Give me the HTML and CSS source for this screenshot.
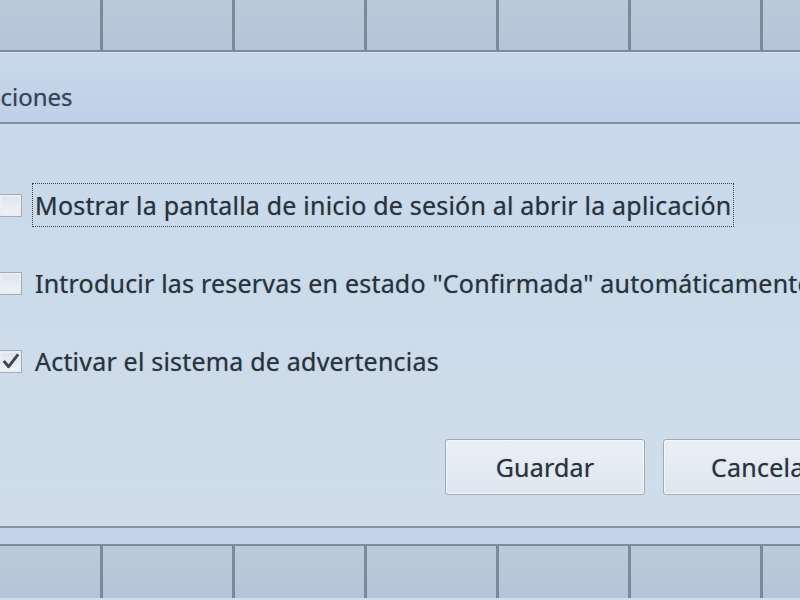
FILE: index.html
```html
<!DOCTYPE html>
<html lang="es">

<head>
    <meta charset="UTF-8">
    <meta name="viewport" content="width=device-width, initial-scale=1.0">
    <title>Opciones</title>
    <link rel="stylesheet" href="styles.css">
</head>

<body>
    <!-- Grid behind the dialog (top) -->
    <div class="grid grid-top">
        <div class="cell"></div>
        <div class="cell"></div>
        <div class="cell"></div>
        <div class="cell"></div>
        <div class="cell"></div>
        <div class="cell"></div>
        <div class="cell"></div>
    </div>

    <div class="dialog">
        <div class="title">Opciones</div>
        <div class="content">
            <div class="option">
                <span class="check"></span>
                <span class="label focused">Mostrar la pantalla de inicio de sesión al abrir la aplicación</span>
            </div>
            <div class="option">
                <span class="check"></span>
                <span class="label">Introducir las reservas en estado "Confirmada" automáticamente</span>
            </div>
            <div class="option">
                <span class="check checked">
                    <svg viewBox="0 0 22 22" width="22" height="22">
                        <path d="M4 11 L9 17 L19 4" fill="none" stroke="#3b4757" stroke-width="3" stroke-linejoin="round" />
                    </svg>
                </span>
                <span class="label">Activar el sistema de advertencias</span>
            </div>
            <div class="buttons">
                <button class="btn">Guardar</button>
                <button class="btn">Cancelar</button>
            </div>
        </div>
    </div>

    <div class="band"></div>

    <!-- Grid behind the dialog (bottom) -->
    <div class="grid grid-bottom">
        <div class="cell"></div>
        <div class="cell"></div>
        <div class="cell"></div>
        <div class="cell"></div>
        <div class="cell"></div>
        <div class="cell"></div>
        <div class="cell"></div>
    </div>
</body>

</html>
```

FILE: styles.css
```css
html,
body {
    margin: 0;
    height: 600px;
    overflow: hidden;
}

body {
    width: 800px;
    font-family: "Noto Sans", "Open Sans", sans-serif;
    color: #29323d;
    background-color: #cfdcea;
    display: flex;
    flex-direction: column;
}

.grid {
    display: flex;
    margin-left: -29px;
    background: linear-gradient(#bcc9da, #b6c4d8);
    flex-shrink: 0;
}

.grid-top {
    height: 50px;
    border-bottom: 2px solid #7d8c9c;
}

.grid-bottom {
    height: 52px;
    border-top: 2px solid #7d8c9c;
}

.cell {
    width: 129px;
    flex-shrink: 0;
    border-right: 3px solid #7b8999;
}

.dialog {
    margin-left: -40px;
    width: 940px;
    flex-shrink: 0;
    border-bottom: 2px solid #8494a6;
}

.title {
    height: 72px;
    box-sizing: border-box;
    padding: 29px 0 0 7px;
    font-size: 24px;
    line-height: 30px;
    color: #354457;
    text-shadow: 0 0 1px rgba(53, 68, 87, 0.5);
    background: linear-gradient(#c8d8ec, #bfd1e8);
    border-top: 1px solid #d6e2f1;
    border-bottom: 2px solid #8191a3;
}

.content {
    height: 402px;
    box-sizing: border-box;
    padding: 59px 0 0 39px;
    background: linear-gradient(#c9d9eb, #d0dde9);
    display: flex;
    flex-direction: column;
    gap: 34px;
}

.option {
    display: flex;
    align-items: center;
    height: 44px;
}

.check {
    width: 21px;
    height: 21px;
    border: 1px solid #a3adb9;
    background: linear-gradient(#dde4ec, #f1f4f7);
    box-shadow: inset 0 0 0 2px #e9eef3;
    flex-shrink: 0;
    display: flex;
    align-items: center;
    justify-content: center;
}

.check svg {
    display: block;
}

.label {
    margin-left: 10px;
    padding: 6px 2px;
    font-size: 25px;
    line-height: 30px;
    letter-spacing: 0.2px;
    text-shadow: 0 0 1px rgba(41, 50, 61, 0.5);
    border: 1px dotted transparent;
    white-space: nowrap;
}

.label.focused {
    border-color: #3a4350;
}

.buttons {
    display: flex;
    gap: 18px;
    margin-top: 22px;
    padding-left: 446px;
}

.btn {
    width: 200px;
    height: 56px;
    flex-shrink: 0;
    font-family: inherit;
    font-size: 25px;
    letter-spacing: 0.2px;
    color: #29323d;
    text-shadow: 0 0 1px rgba(41, 50, 61, 0.5);
    border: 1px solid #9eabba;
    border-radius: 3px;
    background: linear-gradient(#eaf0f6, #dde6ef);
    box-shadow: inset 0 0 0 1px #f3f6fa;
}

.band {
    height: 16px;
    flex-shrink: 0;
    background: linear-gradient(#c6d4ea, #c1d2ea);
}
```
